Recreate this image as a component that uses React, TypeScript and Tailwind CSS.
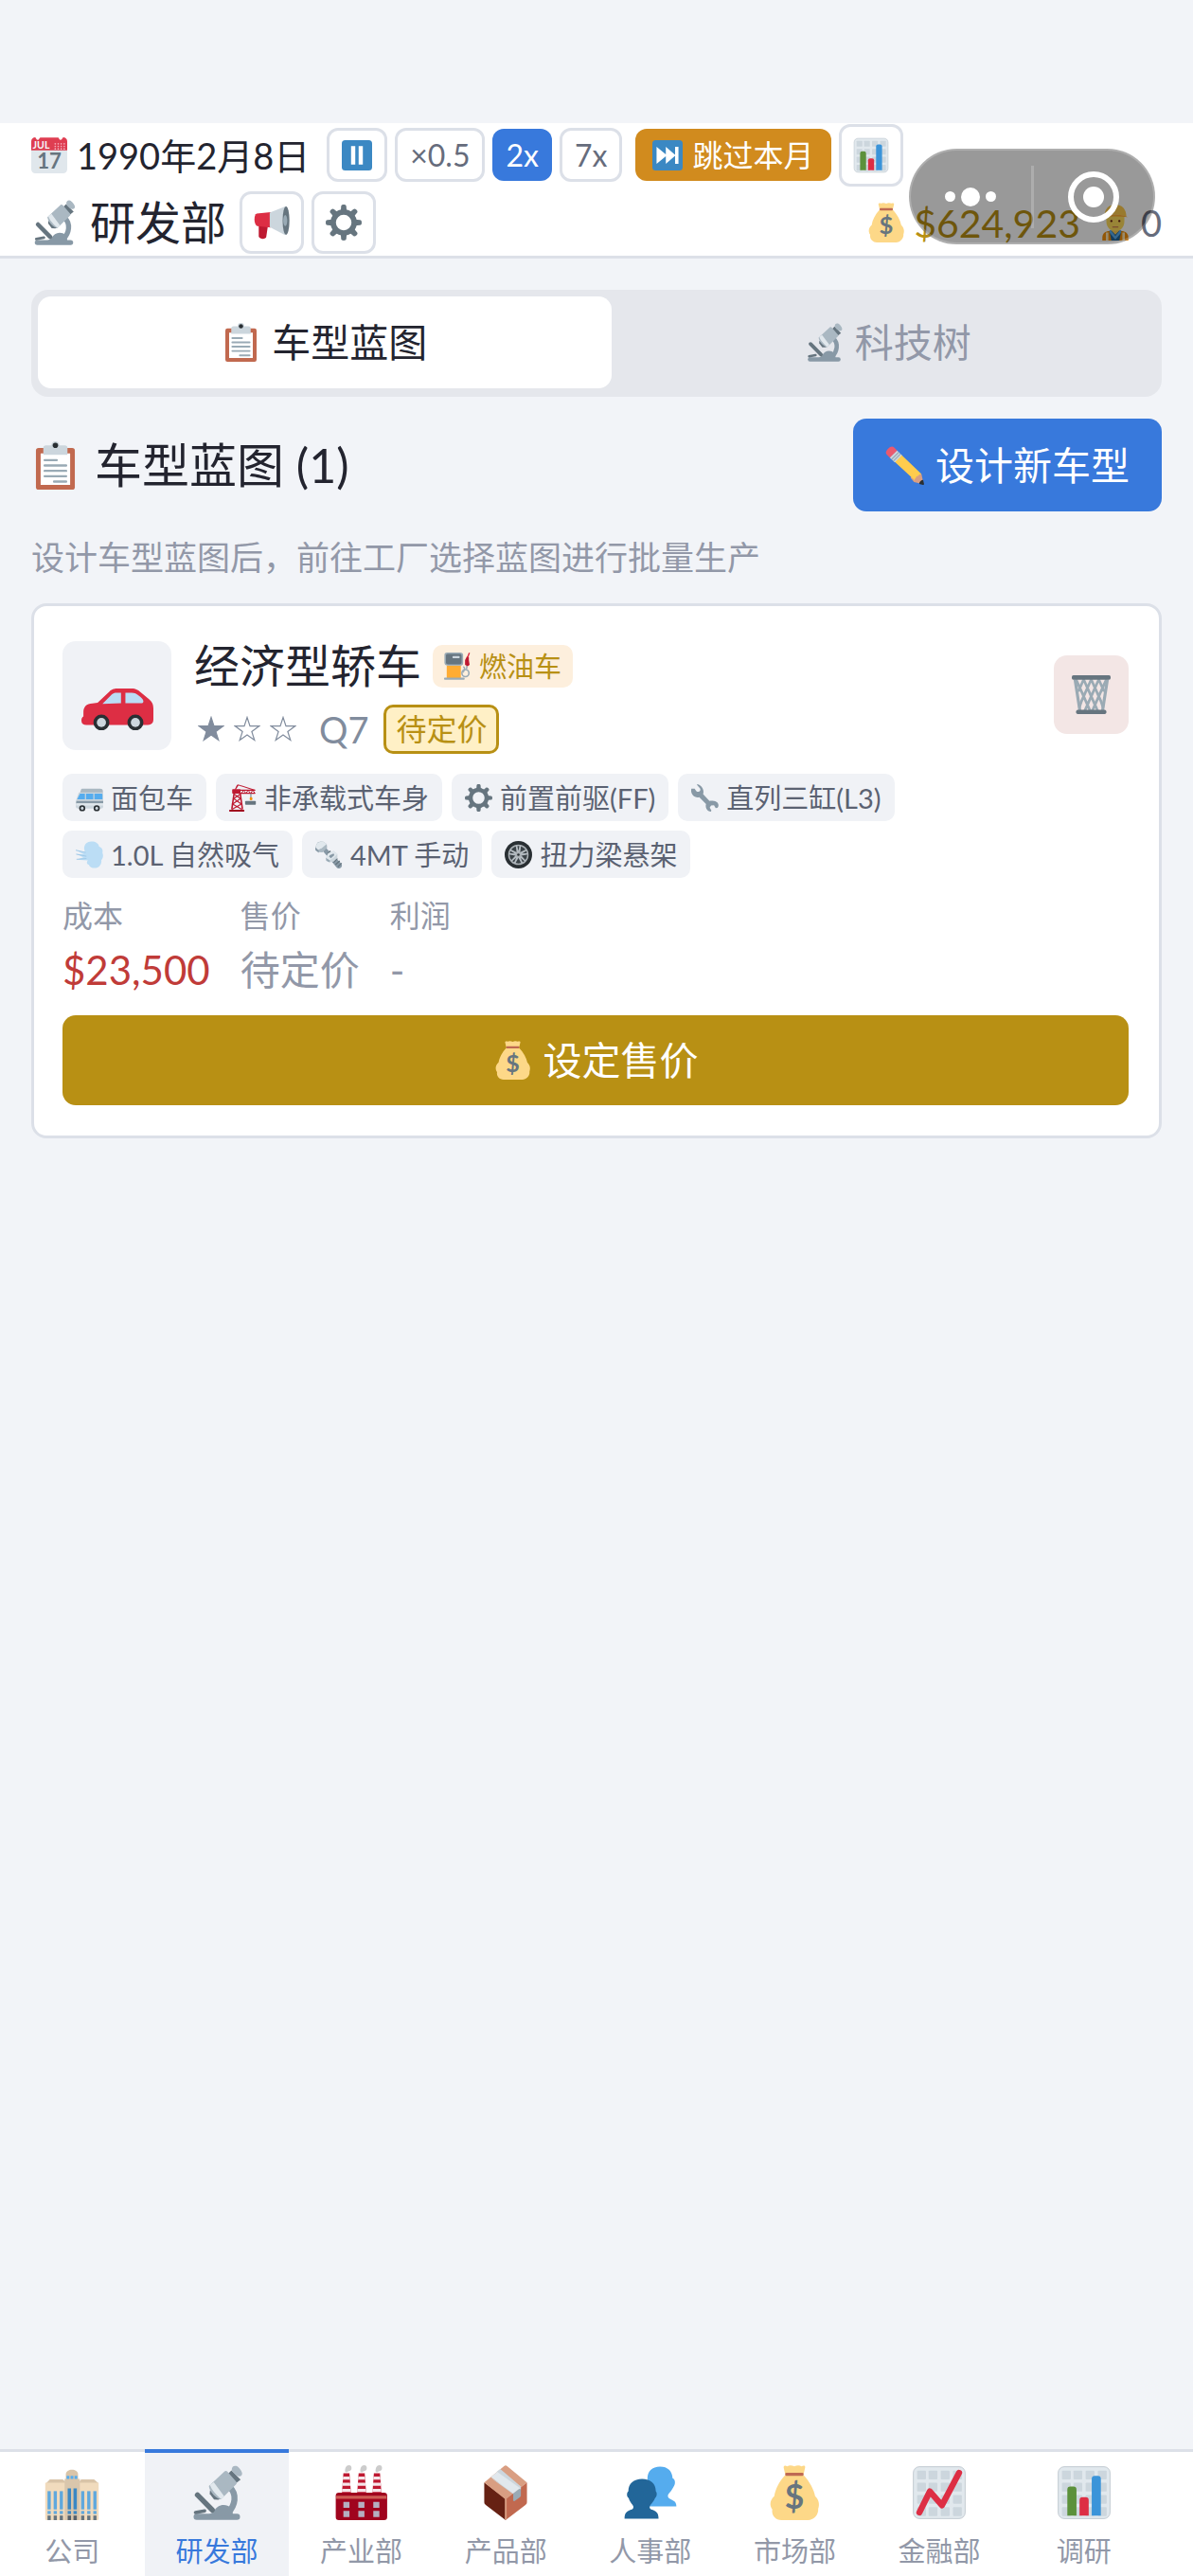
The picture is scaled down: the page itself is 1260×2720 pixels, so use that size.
import React from "react";

type IconProps = { className?: string };

function Svg({ className = "", children }: { className?: string; children: React.ReactNode }) {
  return (
    <svg viewBox="0 0 36 36" aria-hidden="true" className={`shrink-0 ${className}`}>
      {children}
    </svg>
  );
}

function CalendarIcon({ className }: IconProps) {
  return (
    <Svg className={className}>
      <path fill="#E0E7EC" d="M0 10h36v22a4 4 0 0 1-4 4H4a4 4 0 0 1-4-4z" />
      <path
        fill="#DD2E44"
        fillOpacity=".93"
        d="M0 13V4a4 4 0 0 1 4-4c.6 0 .8 2.600 2.400 2.600S8.200.200 9 .200h18c.8 0 .8 2.400 2.400 2.400S31.400 0 32 0a4 4 0 0 1 4 4v9z"
      />
      <text x="1.500" y="11.500" fontSize="10" fontWeight="700" fontFamily="Lato, sans-serif" fill="#F5F8FA">
        JUL
      </text>
      <g fill="#F4ABBA">
        {[24, 27, 30, 33].map((x) =>
          [6.500, 9, 11.500].map((y) => <circle key={`${x}-${y}`} cx={x} cy={y} r=".8" />),
        )}
      </g>
      <text
        x="18"
        y="31.500"
        fontSize="21"
        fontWeight="700"
        textAnchor="middle"
        fontFamily="Lato, sans-serif"
        fill="#66757F"
      >
        17
      </text>
    </Svg>
  );
}

function MicroscopeIcon({ className }: IconProps) {
  return (
    <Svg className={className}>
      <path fill="none" stroke="#8899A6" strokeWidth="4" d="M26.500 14.500C31.500 19 30 26.500 25.500 31" />
      <rect x="2.800" y="31.800" width="30.400" height="4" rx="2" fill="#8899A6" />
      <path fill="#8899A6" d="M12 33c1-1 3-1.500 4.200-3 1.300-2.400 3.500-4 6.300-4 3.600 0 6 2.600 6 6v1z" />
      <path stroke="#66757F" strokeWidth="3.400" strokeLinecap="round" d="M5.300 19.500l9.700 9.800" />
      <path stroke="#66757F" strokeWidth="2.200" strokeLinecap="round" d="M4 31l6-1.100" />
      <path fill="#66757F" d="M13.500 16.500l7.500 5.300-2 .9-2.800-.2-2.800-3.700z" />
      <path fill="#66757F" d="M24.800 6.200l2.800-2.800 6 6-2.800 2.300z" />
      <path fill="#AAB8C2" d="M12.800 13.600l10.300-9.500c.6-.5 1.300-.4 1.800.1l5.700 6.500c.6.7.6 1.300 0 1.900l-9.800 9.800c-2.700-.300-7.600-4.600-8-8.800z" />
      <path fill="#E1E8ED" d="M13.500 12.900l2.500-1.800 6.800 9.200-1.800 1.900c-2.800-2-6.500-6-7.500-9.300z" />
      <path fill="#AAB8C2" d="M27.800 3c0-1.800 1-2.800 2.800-2.500 1.500.3 4 3.300 4 5 0 1.300-.8 2-2.200 1.800-1.700-.3-4.600-3-4.600-4.300z" />
    </Svg>
  );
}

function MegaphoneIcon({ className }: IconProps) {
  return (
    <Svg className={className}>
      <path fill="#BE1931" d="M5 19h9.500l-2 13.500c-.3 2.400-6.700 2.400-7.500-.5z" />
      <path fill="#DD2E44" d="M3 9l14-1.500v15.500L3.500 21.500C.2 20.500-.4 10.500 3 9z" />
      <path fill="#CCD6DD" d="M16 8L31.500 2c2 4 2 24 0 28.500L16 22.500z" />
      <ellipse cx="32.300" cy="16" rx="3.400" ry="14.200" fill="#66757F" />
      <ellipse cx="31.500" cy="16" rx="2" ry="5.500" fill="#99AAB5" />
    </Svg>
  );
}

function GearIcon({ className }: IconProps) {
  return (
    <Svg className={className}>
      <g fill="#66757F">
        {[0, 45, 90, 135, 180, 225, 270, 315].map((angle) => (
          <path key={angle} transform={`rotate(${angle} 18 18)`} d="M15 7l.4-5.200C15.500.400 16.500 0 18 0s2.500.400 2.600 1.800L21 7z" />
        ))}
      </g>
      <circle cx="18" cy="18" r="10.500" fill="none" stroke="#66757F" strokeWidth="5.400" />
    </Svg>
  );
}

function PauseIcon({ className }: IconProps) {
  return (
    <Svg className={className}>
      <rect width="36" height="36" rx="4" fill="#3B88C3" />
      <path fill="#FFF" d="M11 7h5v22h-5zM20 7h5v22h-5z" />
    </Svg>
  );
}

function SkipIcon({ className }: IconProps) {
  return (
    <Svg className={className}>
      <rect width="36" height="36" rx="4" fill="#3B88C3" />
      <path fill="#FFF" d="M5 8l11 9V8l11 9.500V8h4v20h-4v-9.500L16 28v-9L5 28z" />
    </Svg>
  );
}

function ChartTile() {
  return (
    <>
      <rect x="1" y="1" width="34" height="34" rx="4" fill="#E1E8ED" stroke="#B9C2C9" strokeWidth=".5" />
      <g fill="#CCD6DD">
        {[3.500, 11, 19, 27].map((x) =>
          [3.500, 11.500, 19.500, 27.500].map((y) => <rect key={`${x}-${y}`} x={x} y={y} width="5.800" height="5.800" rx=".6" />),
        )}
      </g>
    </>
  );
}

function BarsIcon({ className }: IconProps) {
  return (
    <Svg className={className}>
      <ChartTile />
      <path fill="#5C913B" d="M7 33V16a2 2 0 0 1 2-2h2a2 2 0 0 1 2 2v17z" />
      <path fill="#DD2E44" d="M15 33V23a2 2 0 0 1 2-2h2a2 2 0 0 1 2 2v10z" />
      <path fill="#3B94D9" d="M23 33V9a2 2 0 0 1 2-2h2a2 2 0 0 1 2 2v24z" />
    </Svg>
  );
}

function TrendIcon({ className }: IconProps) {
  return (
    <Svg className={className}>
      <ChartTile />
      <path
        d="M5 31l6.800-13.800 8 9.100L31 5"
        fill="none"
        stroke="#DD2E44"
        strokeWidth="4"
        strokeLinecap="round"
        strokeLinejoin="round"
      />
    </Svg>
  );
}

function MoneyBagIcon({ className }: IconProps) {
  return (
    <Svg className={className}>
      <path
        fill="#FDD888"
        d="M12 6.500h12c4 4.200 6.800 9.500 7.600 13.800 2.600 2.200 3 5.800 2 8.200.5 4-3.200 7.500-6.600 7.500H9.500c-3.600 0-6.700-3-6-7-2-2.700-1.500-6.400 1.300-8.700C5.500 16 8 10.500 12 6.500z"
      />
      <path fill="#FDD888" d="M12 6l-1-4.300C10.700.300 12 0 13.300.700 14.800-.200 16.600.200 18 .800c1.400-.7 3.200-.9 4.700-.1C24 0 25.400.300 25 1.700L24 6z" />
      <rect x="12" y="5" width="12" height="2" rx=".8" fill="#BF6952" />
      <text
        x="18"
        y="28.700"
        fontSize="22"
        fontWeight="700"
        textAnchor="middle"
        fontFamily="Lato, sans-serif"
        fill="#67757F"
      >
        $
      </text>
    </Svg>
  );
}

function WorkerIcon({ className }: IconProps) {
  return (
    <Svg className={className}>
      <path fill="#F4900C" d="M5 36v-3c0-4 3-6.500 7-6.500h12c4 0 7 2.500 7 6.500v3z" />
      <path fill="#269" d="M12 26h12l-2 10h-8z" />
      <path fill="#5DADEC" d="M13 25l5 6.500 5-6.500 1 3-6 7-6-7z" />
      <path fill="#FFE8B6" d="M8.500 28h2.500v8H8.500zM25 28h2.500v8H25z" />
      <path fill="#F9CA55" d="M14.500 21h7v5.500L18 30l-3.500-3.500z" />
      <path fill="#FFDC5D" d="M9 11h18v6c0 5.500-4 9.500-9 9.500S9 22.500 9 17z" />
      <path fill="#FFCC4D" d="M7 12C7 5 11 0 18 0s11 5 11 12c-7-2.500-15-2.500-22 0z" />
      <path fill="#FFAC33" d="M5.500 12.500C13 9 23 9 30.500 12.500c-8-1-17-1-25 0z" />
      <circle cx="14" cy="16.500" r="1.100" fill="#662113" />
      <circle cx="22" cy="16.500" r="1.100" fill="#662113" />
      <path fill="none" stroke="#C1694F" d="M15 22.500h6" />
    </Svg>
  );
}

function ClipboardIcon({ className }: IconProps) {
  return (
    <Svg className={className}>
      <rect x="3.500" y="5" width="29" height="31" rx="2" fill="#C1694F" />
      <path fill="#FFF" d="M7 9h22v23.500H7z" />
      <path fill="#CCD6DD" d="M25 3h-4a3 3 0 1 0-6 0h-4a2 2 0 0 0-2 2v5h18V5a2 2 0 0 0-2-2z" />
      <circle cx="18" cy="3" r="2" fill="#292F33" />
      <path stroke="#99AAB5" strokeWidth="1.700" strokeLinecap="round" d="M10 14h9M10 18h16M10 22h16M10 26h16M17 30h9" />
    </Svg>
  );
}

function PencilIcon({ className }: IconProps) {
  return (
    <Svg className={className}>
      <path fill="#D99E82" d="M35.200 33.600l-1.600-7.500-3.700-3-6.500 6.300 3.300 4 7.400 1.700z" />
      <path fill="#EA596E" d="M8.200 1.400C6.600-.200 4.800.300 2.700 2.400.600 4.500-.100 6.300 1.400 7.900l3 3 6.800-6.600z" />
      <path fill="#FFCC4D" d="M26.700 33.200c.1-1.600-.3-2.600-1.200-3.200L8.200 14l6.300-6.400 19 18.300c-1.500.200-2.600.800-3 1.800-1.200.200-2.100.900-2.300 2.200-1 .500-1.600 1.500-1.500 3.300z" />
      <path fill="#CCD6DD" d="M4.200 10.800l6.800-6.700 4.400 4.400-6.600 6.700z" />
      <path stroke="#99AAB5" strokeWidth="1" d="M5.900 12.300l6.700-6.600M7.500 13.900l6.500-6.600" />
      <path fill="#292F33" d="M35.900 35c.2.600-.3 1-.9.900l-3.500-.8c.1-2 1.700-3.500 3.600-3.700z" />
    </Svg>
  );
}

function TrashIcon({ className }: IconProps) {
  return (
    <Svg className={className}>
      <g fill="none" stroke="#9AAAB4">
        <path strokeWidth="2.800" d="M3 4l4.500 29M33 4l-4.500 29" />
        <path strokeWidth="2.400" d="M4 4l5 11 4 9 4 9M11 4l5 11 4 9 4 9M18 4l5 11 4 9 2 6M25 4l5 11M32 4l-5 11-4 9-4 9M25 4l-5 11-4 9-4 9M18 4l-5 11-4 9-2 6M11 4L6 15" />
      </g>
      <rect width="36" height="4.200" rx="1.500" fill="#66757F" />
      <rect x="4" y="32" width="28" height="4" rx="1.500" fill="#66757F" />
    </Svg>
  );
}

function CarIcon({ className }: IconProps) {
  return (
    <svg viewBox="0 0 36 21" aria-hidden="true" className={`shrink-0 ${className ?? ""}`}>
      <path
        fill="#DD2E44"
        d="M1 12c0-3 1.500-4.200 4.500-4.500l2.600-.4L14 1.500C15.200.400 16 0 18 0h7c1.500 0 2.500.3 3.500 1l5.300 4.300C35.500 6.800 36 8 36 10v5.500c0 1.800-1 2.700-3 2.700H2.500C.7 18.200 0 17.500 0 16c0-1.200.5-1.700 1-2z"
      />
      <path fill="#BBDDF5" d="M10.500 7.700L15.200 3c.7-.7 1.300-.9 2.300-.9h2.300v5.300zM22 2.100h3.200c1.300 0 2 .3 3 1.100 1.900 1.400 2.800 2.300 2.800 3.200 0 .8-.5 1-1.300 1H22z" />
      <circle cx="10" cy="17" r="4" fill="#292F33" />
      <circle cx="10" cy="17" r="2.300" fill="#CCD6DD" />
      <circle cx="27" cy="17" r="4" fill="#292F33" />
      <circle cx="27" cy="17" r="2.300" fill="#CCD6DD" />
    </svg>
  );
}

function FuelIcon({ className }: IconProps) {
  return (
    <Svg className={className}>
      <path fill="none" stroke="#99AAB5" strokeWidth="1.800" d="M25 19c3 0 2 5-.5 7M29.500 17c1 2 .3 3.500-.5 4.500" />
      <circle cx="28" cy="27" r="4.600" fill="none" stroke="#99AAB5" strokeWidth="2" />
      <path fill="#BE1931" d="M27.500 10l2.500-5 2.500 1v4l1 6-2.500 2-3.500-2z" />
      <path stroke="#DD2E44" strokeWidth="1.800" strokeLinecap="round" d="M31 6l2-5" />
      <rect x="3.500" y="17" width="18.500" height="17" fill="#FFAC33" />
      <path fill="#99AAB5" d="M4 0h17c2.500 0 4 1 4 3.500V14c0 2-1 3-3 3H5c-3 0-4.500-1-4.500-4V3.500C.500 1 1.500 0 4 0z" />
      <path fill="#66757F" d="M4.500 2h16c1.500 0 2.500.8 2.500 2.500V13c0 1.500-1 2.500-2.500 2.500h-15C3.500 15.500 2.500 14.500 2.500 13V4.500C2.500 3 3 2 4.500 2z" />
      <rect x="11" y="4.500" width="9.500" height="3" rx="1" fill="#CCD6DD" />
      <rect x="0" y="33" width="27" height="2.800" rx="1" fill="#99AAB5" />
    </Svg>
  );
}

function VanIcon({ className }: IconProps) {
  return (
    <Svg className={className}>
      <path fill="#AAB8C2" d="M7 7C7.500 6.100 8 6 9 6h23c2 0 3.500 1 3.500 3v4H5z" />
      <path fill="#CCD6DD" d="M4 11h31.500c.3 0 .5.300.5.700V29c0 1.800-.8 3-2.500 3H3c-2 0-3-1-3-3v-6.500z" />
      <path fill="#55ACEE" d="M5.500 12.500H12V20H1.800zM13.500 12.500H23V20h-9.500zM24.500 12.500H34c.6 0 1 .4 1 1V20H24.500z" />
      <path fill="#8899A6" d="M1 22h35v3H.500z" />
      <path fill="#E1E8ED" d="M.5 25H36v3H.300z" />
      <circle cx="8.500" cy="31.500" r="4" fill="#292F33" />
      <circle cx="8.500" cy="31.500" r="1.900" fill="#CCD6DD" />
      <circle cx="27.500" cy="31.500" r="4" fill="#292F33" />
      <circle cx="27.500" cy="31.500" r="1.900" fill="#CCD6DD" />
    </Svg>
  );
}

function CraneIcon({ className }: IconProps) {
  return (
    <Svg className={className}>
      <g fill="none" stroke="#BE1931">
        <path strokeWidth="2" d="M6.500 12L3.500 33M14.500 12l3 21" />
        <path strokeWidth="1.500" d="M6.500 13l8.500 6M14.500 13L6 19l10 7M15 19L4.500 26l12 7M16 26L4 33" />
        <path strokeWidth="1.300" d="M8 7L12 1l22 7M8 7L11 1" />
        <path strokeWidth="1.500" d="M14 8h20M14 12h20" />
        <path strokeWidth="1.200" d="M16 12l3-4 3 4 3-4 3 4 3-4 3 4" />
      </g>
      <rect x="4" y="6.500" width="11" height="6" rx="1" fill="#BE1931" />
      <rect x="0" y="33.500" width="20" height="2.500" rx="1" fill="#A0041E" />
      <path stroke="#66757F" strokeWidth="1.200" d="M28.500 12v6" />
      <rect x="27" y="17" width="3.500" height="4" rx="1.500" fill="#F4900C" />
      <rect x="21" y="22" width="14" height="5" rx="1" fill="#66757F" />
    </Svg>
  );
}

function WrenchIcon({ className }: IconProps) {
  return (
    <Svg className={className}>
      <path
        fill="#8899A6"
        d="M27.900 21.700c-1.400-.2-2.700-.1-3.900.4L15.600 13c.8-2.300.7-5-.6-7.500C13.500 2.500 10.800.600 8 .100L7.600 1l4 4.500c.8 1.500.3 3.400-1.200 4.200-1.500.8-3.400.3-4.200-1.200L4.500 5.800.3 6c-.8 2.700-.3 5.800 1.500 8.100 2.200 2.900 5.700 3.900 8.800 3.100L19.500 26c-.6 2-.5 4.300.5 6.300 1.200 2.400 3.500 3.700 5.900 3.700l.6-1.500-2.200-3.700 1.800-3 3.800-.1 2.200 3.700 2.400-.5c1.600-1.900 1.900-4.400 0-6.800-1.500-1.500-4-2.300-6.600-2.400z"
      />
    </Svg>
  );
}

function WindIcon({ className }: IconProps) {
  return (
    <Svg className={className}>
      <path
        fill="#BBDDF5"
        d="M11 10c0-6 4-9.500 9.500-9.500C26 .500 30 3 30.500 7c4 1.500 5.500 5 4.500 8.500 1.500 3 1 7-1.500 9.500 1 5-3 10.500-8.500 10.500-4 0-7-1.500-8-4.500-3-1-3-4-1-5.500L1 24.500l9-3-9.500-4.500 10 .5L0 12l12 2.500z"
      />
      <path fill="none" stroke="#99C3E5" strokeWidth="1" d="M0 12l13 3M.500 17.300L14 20M1 24l13-1" />
    </Svg>
  );
}

function BoltIcon({ className }: IconProps) {
  return (
    <Svg className={className}>
      <path fill="#8899A6" d="M9 12l4-4 21 21.500c2 2.500.5 6-2.500 6.500-1.500 0-3-.5-4-2z" />
      <path stroke="#66757F" strokeWidth="1.600" d="M24 28l5-5M26.500 31l5.500-5M29.500 34l5-5M16 17l4-4" />
      <path fill="#AAB8C2" d="M0 8l3-6 6-2 6 4 .5 5-6 6-5-.5L0 12z" />
      <path fill="#E1E8ED" d="M3 2.500L9 0l6 4-6 5-6 3L0 8z" />
      <path fill="#8899A6" d="M0 8l4.500 4.500v3L.500 12z" />
      <path fill="#CCD6DD" d="M14 22l3-6 7-3 5 4v5l-5 5-6 1-4-3z" />
      <path fill="#99AAB5" d="M14 22l5 3v3l-4.500-2z" />
      <path fill="#E1E8ED" d="M17 16l7-3 5 4-5 5-5 3-5-3z" />
      <path fill="#8899A6" d="M19 18.500l5-2 1 2-4.500 4-2.500-2z" />
    </Svg>
  );
}

function WheelIcon({ className }: IconProps) {
  return (
    <Svg className={className}>
      <circle cx="18" cy="18" r="18" fill="#292F33" />
      <circle cx="18" cy="18" r="12.500" fill="#3B4348" stroke="#AAB0B5" strokeWidth="1.800" />
      {[0, 72, 144, 216, 288].map((angle) => (
        <path key={angle} transform={`rotate(${angle} 18 18)`} fill="#B5BCC2" d="M16 18L14.500 6h2l1.500 7 1.500-7h2L20 18z" />
      ))}
      <circle cx="18" cy="18" r="3.600" fill="#AAB0B5" />
      <circle cx="18" cy="18" r="1.600" fill="#292F33" />
    </Svg>
  );
}

function CompanyIcon({ className }: IconProps) {
  return (
    <Svg className={className}>
      <path fill="#D9C4A8" d="M1 12l2.500-2.700H12l3 2.700zM22 12l2-2.700h8.500L35.500 12z" />
      <path fill="#F1DBBD" d="M.500 11.500h35V35c0 .6-.4 1-1 1h-33c-.6 0-1-.4-1-1z" />
      <path fill="#D9C6AC" d="M13.200 9h10v27h-10z" />
      <path fill="#D9C4A8" d="M14 6c0-4 8-4 8 0v3.500h-8z" />
      <path fill="#55ACEE" d="M14.500 7h1.800v2h-1.800zM17.100 7h1.800v2h-1.800zM19.700 7h1.800v2h-1.800z" />
      {[2, 6, 10, 24, 28, 32].map((x) => (
        <g key={x}>
          <rect x={x} y="17" width="2.100" height="12" fill="#5FA8DD" />
          <rect x={x} y="30" width="2.100" height="2" fill="#5FA8DD" />
          <rect x={x} y="33" width="2.100" height="3" fill="#66757F" />
        </g>
      ))}
      {[15.200, 19].map((x) => (
        <g key={x}>
          <rect x={x} y="15.200" width="2.200" height="13.800" fill="#3B88C3" />
          <rect x={x} y="30" width="2.200" height="2" fill="#3B88C3" />
          <rect x={x} y="33" width="2.200" height="3" fill="#55606A" />
        </g>
      ))}
    </Svg>
  );
}

function FactoryIcon({ className }: IconProps) {
  return (
    <Svg className={className}>
      {[8, 18, 28].map((x) => (
        <g key={x} transform={`translate(${x} 0)`}>
          <path fill="#BE1931" d="M-2 5.300h4L3 19h-6z" />
          <path fill="#F5E6EA" d="M-2.200 7.500h4.300l.2 2h-4.700zM-2.500 11.500h4.900l.2 2h-5.300zM-2.800 15.500h5.500l.2 2h-5.900z" />
          <path fill="#CCCCCC" d="M-.800 4.500C-1.300 2 0 0 1.500 0 3 0 3.600 1 3.300 2.500 3 4 1.500 3.500.500 4.600z" />
        </g>
      ))}
      <path fill="#A0041E" d="M1 20c0-1.300.7-2 2-2h29.700c1.300 0 2 .7 2 2v14c0 1.300-.7 2-2 2H3c-1.300 0-2-.7-2-2z" />
      <path fill="#CE5B53" d="M1.300 20h33v2h-33z" />
      <path fill="#B5AFC0" d="M6 24h4v4H6zM15.800 24h4v4h-4zM25.600 24h4v4h-4zM6 30h4v4H6zM15.800 30h4v4h-4zM25.600 30h4v4h-4z" />
    </Svg>
  );
}

function PackageIcon({ className }: IconProps) {
  return (
    <Svg className={className}>
      <path fill="#662113" d="M4 11.400L18 22v14L5 26c-.7-.5-1-1-1-2z" />
      <path fill="#C1694F" d="M32 11.400L18 22v14l13-10c.7-.5 1-1 1-2z" />
      <path fill="#D99E82" d="M18 22.500L4 11.400 17 .600c.7-.5 1.300-.5 2 0l13 10.800z" />
      <path fill="#D99E82" d="M17.500 21.500l1.200.5v13l-1.200 1z" />
      <path fill="#99AAB5" d="M23 18.300l5-3.800v5.200c0 .6-.2.900-.6 1.200l-3.400 2.500c-.6.4-1 .2-1-.4z" />
      <path fill="#CCD6DD" d="M12 4.500L28 16v-2L14.500 2.500zM8 8l15 11v-2z" />
      <path fill="#E1E8ED" d="M8.300 7.800L12.500 4.300 27.500 15l-4.500 3.500z" />
    </Svg>
  );
}

function PeopleIcon({ className }: IconProps) {
  return (
    <Svg className={className}>
      <path
        fill="#55ACEE"
        d="M16 9c0-5 3-8 8.300-8 5 0 8 3 8.200 7.500 1.700.4 2 3.500 1 5-.8 1.500-1.500 3-3 4.500-1.200 1.200-1.500 2.500-.5 3.500 2 1.500 5 1.500 5 5.500H16z"
      />
      <path
        fill="#226699"
        d="M3.500 17c0-5 3.500-8 9-8s9 3 9 8c1 1 .8 3.500-.5 4.500-.8 2-2 3.300-3 4.500-1 1.400-.5 2.500.5 3 3 .8 4.800 2 4.800 6H1c0-4 1.800-5.200 4.800-6 1-.500 1.500-1.600.5-3-1-1.200-2-2.500-2.600-4.500-1.400-1-1.400-3.500-.2-4.500z"
      />
    </Svg>
  );
}

function Star({ filled = false }: { filled?: boolean }) {
  return (
    <svg viewBox="0 0 28 28" aria-hidden="true" className="size-7">
      <path
        d="M14 1.500l3 9.200h9.600l-7.700 5.700 2.900 9.100-7.800-5.600-7.800 5.600 2.900-9.100-7.700-5.700H11z"
        fill={filled ? "#818C9D" : "none"}
        stroke="#818C9D"
        strokeWidth="1.200"
      />
    </svg>
  );
}

const speedButton =
  "flex h-[57px] items-center justify-center rounded-xl border-[3px] border-[#dce0e8] px-[13px] text-[32px] leading-none";
const iconButton = "flex items-center rounded-xl border-[3px] border-[#dce0e8] bg-white px-3 h-[66px]";

function MiniAppCapsule() {
  return (
    <div className="absolute top-[157px] right-10 flex h-[101px] w-[260px] items-center rounded-full border-2 border-white/20 bg-black/40">
      <button aria-label="更多" className="flex h-full flex-1 items-center justify-center gap-1.5">
        <span className="size-[11px] rounded-full bg-white" />
        <span className="size-5 rounded-full bg-white" />
        <span className="size-[11px] rounded-full bg-white" />
      </button>
      <span className="h-[66px] w-[3px] bg-white/20" />
      <button aria-label="关闭" className="flex h-full flex-1 items-center justify-center">
        <span className="flex size-[54px] items-center justify-center rounded-full border-[6px] border-white">
          <span className="size-[22px] rounded-full bg-white" />
        </span>
      </button>
    </div>
  );
}

function Header() {
  return (
    <header className="border-b-[3px] border-[#dce0e8] bg-white px-[33px] pb-0.5">
      <div className="flex h-[67px] items-center">
        <div className="flex items-center gap-2.5 text-[38px] leading-none text-[#23242f]">
          <CalendarIcon className="size-[38px]" />
          <span>1990年2月8日</span>
        </div>
        <div className="ml-[18px] flex items-center gap-2">
          <button aria-label="暂停" className={speedButton}>
            <PauseIcon className="size-8" />
          </button>
          <button className={`${speedButton} text-[#666c7c]`}>×0.5</button>
          <button className="flex h-[55px] items-center rounded-xl bg-[#3879dc] px-[14px] text-[32px] leading-none text-white">
            2x
          </button>
          <button className={`${speedButton} text-[#666c7c]`}>7x</button>
          <button className="ml-1.5 flex h-[55px] items-center gap-2.5 rounded-xl bg-[#d18b1e] px-[18px] text-[32px] leading-none text-white">
            <SkipIcon className="size-8" />
            跳过本月
          </button>
          <button aria-label="统计" className={iconButton}>
            <BarsIcon className="size-[38px]" />
          </button>
        </div>
      </div>
      <div className="mt-[5px] flex items-center">
        <MicroscopeIcon className="size-12" />
        <h1 className="ml-[14px] text-[48px] leading-none text-[#23242f]">研发部</h1>
        <div className="ml-[14px] flex gap-2">
          <button aria-label="公告" className={iconButton}>
            <MegaphoneIcon className="size-[38px]" />
          </button>
          <button aria-label="设置" className={iconButton}>
            <GearIcon className="size-[38px]" />
          </button>
        </div>
        <div className="ml-auto flex items-center leading-none">
          <MoneyBagIcon className="size-[42px]" />
          <span className="ml-2 text-[41px] text-[#b89014]">$624,923</span>
          <WorkerIcon className="ml-[18px] size-[38px]" />
          <span className="ml-2 text-[38px] text-[#666c7c]">0</span>
        </div>
      </div>
    </header>
  );
}

const specs = [
  { label: "面包车", Icon: VanIcon },
  { label: "非承载式车身", Icon: CraneIcon },
  { label: "前置前驱(FF)", Icon: GearIcon },
  { label: "直列三缸(L3)", Icon: WrenchIcon },
  { label: "1.0L 自然吸气", Icon: WindIcon },
  { label: "4MT 手动", Icon: BoltIcon },
  { label: "扭力梁悬架", Icon: WheelIcon },
];

const figures = [
  { label: "成本", value: "$23,500", tone: "text-[#c03b38]" },
  { label: "售价", value: "待定价", tone: "text-[#9298a8]" },
  { label: "利润", value: "-", tone: "text-[#9298a8]" },
];

function BlueprintCard() {
  return (
    <article className="mt-[23px] rounded-2xl border-[3px] border-[#dce0e8] bg-white pt-[37px] pr-8 pb-8 pl-[30px]">
      <div className="flex items-start">
        <div className="flex size-[115px] items-end justify-center rounded-[14px] bg-[#f0f2f6] pb-[21px]">
          <CarIcon className="w-[76px]" />
        </div>
        <div className="ml-6 flex flex-col gap-[15px]">
          <div className="flex h-[52px] items-center gap-3">
            <h3 className="text-[48px] leading-none text-[#23242f]">经济型轿车</h3>
            <span className="flex h-[45px] items-center gap-2 rounded-[10px] bg-[#fdefdd] px-3 text-[29px] leading-none text-[#b89014]">
              <FuelIcon className="size-[29px]" />
              燃油车
            </span>
          </div>
          <div className="flex h-[52px] items-center">
            <span className="ml-1 flex gap-2.5" role="img" aria-label="1 / 3">
              <Star filled />
              <Star />
              <Star />
            </span>
            <span className="ml-6 text-[38px] leading-none text-[#818c9d]">Q7</span>
            <span className="ml-4 flex h-[52px] items-center rounded-[10px] border-[3px] border-[#b89014] bg-[#fff0c6] px-2.5 text-[32px] leading-none text-[#b89014]">
              待定价
            </span>
          </div>
        </div>
        <button aria-label="删除蓝图" className="mt-[15px] ml-auto rounded-[14px] bg-[#f3e6e5] px-[19px] py-[21px]">
          <TrashIcon className="size-[41px]" />
        </button>
      </div>

      <ul className="mt-[21px] flex max-w-[920px] flex-wrap gap-x-2.5 gap-y-2.5">
        {specs.map(({ label, Icon }) => (
          <li
            key={label}
            className="flex h-[50px] items-center gap-2 rounded-[10px] bg-[#f0f2f6] px-[14px] text-[29px] leading-none text-[#5b6272]"
          >
            <Icon className="size-[29px]" />
            {label}
          </li>
        ))}
      </ul>

      <dl className="mt-[18px] flex gap-8">
        {figures.map((f) => (
          <div key={f.label}>
            <dt className="text-[32px] leading-[44px] text-[#9298a8]">{f.label}</dt>
            <dd className={`mt-[7px] text-[42px] leading-[56px] ${f.tone}`}>{f.value}</dd>
          </div>
        ))}
      </dl>

      <button className="mt-5 flex h-[95px] w-full items-center justify-center gap-3 rounded-[14px] bg-[#b89014] text-[41px] leading-none text-white">
        <MoneyBagIcon className="size-[41px]" />
        设定售价
      </button>
    </article>
  );
}

const tabs = [
  { label: "公司", Icon: CompanyIcon },
  { label: "研发部", Icon: MicroscopeIcon, active: true },
  { label: "产业部", Icon: FactoryIcon },
  { label: "产品部", Icon: PackageIcon },
  { label: "人事部", Icon: PeopleIcon },
  { label: "市场部", Icon: MoneyBagIcon },
  { label: "金融部", Icon: TrendIcon },
  { label: "调研", Icon: BarsIcon },
];

function BottomNav() {
  return (
    <nav className="mt-auto grid grid-cols-8 bg-white pr-[39px] shadow-[inset_0_3px_0_#dce0e8]">
      {tabs.map(({ label, Icon, active }) => (
        <a
          key={label}
          href="#"
          aria-current={active ? "page" : undefined}
          className={`flex h-[134px] flex-col items-center border-t-4 pt-[13px] text-[29px] leading-[44px] ${
            active ? "border-[#3879dc] bg-[#f0f2f6] text-[#3879dc]" : "border-transparent text-[#9298a8]"
          }`}
        >
          <Icon className="size-[58px]" />
          <span className="mt-[11px]">{label}</span>
        </a>
      ))}
    </nav>
  );
}

export default function App() {
  return (
    <div
      lang="zh-CN"
      className="relative flex min-h-screen flex-col bg-[#f2f4f8] pt-[130px] font-[Lato,'Noto_Sans_CJK_SC',sans-serif]"
    >
      <Header />
      <MiniAppCapsule />
      <main className="px-[33px] pt-[33px]">
        <div role="tablist" className="flex gap-2.5 rounded-[18px] bg-[#e5e7ec] px-[7px] pt-[7px] pb-[9px] text-[41px] leading-none">
          <button
            role="tab"
            aria-selected="true"
            className="flex h-[97px] flex-auto items-center justify-center gap-3 rounded-[14px] bg-white text-[#23242f]"
          >
            <ClipboardIcon className="size-[41px]" />
            车型蓝图
          </button>
          <button
            role="tab"
            aria-selected="false"
            className="flex h-[97px] flex-auto items-center justify-center gap-3 rounded-[14px] text-[#9298a8]"
          >
            <MicroscopeIcon className="size-[41px]" />
            科技树
          </button>
        </div>

        <div className="mt-[23px] flex items-center justify-between">
          <h2 className="flex items-center gap-4 text-[50px] leading-none text-[#23242f]">
            <ClipboardIcon className="size-[51px]" />
            车型蓝图 (1)
          </h2>
          <button className="flex h-[98px] items-center gap-3 rounded-[14px] bg-[#3879dc] px-[34px] text-[41px] leading-none text-white">
            <PencilIcon className="size-[41px]" />
            设计新车型
          </button>
        </div>
        <p className="mt-[22px] text-[35px] leading-[52px] text-[#9298a8]">设计车型蓝图后，前往工厂选择蓝图进行批量生产</p>

        <BlueprintCard />
      </main>
      <BottomNav />
    </div>
  );
}
